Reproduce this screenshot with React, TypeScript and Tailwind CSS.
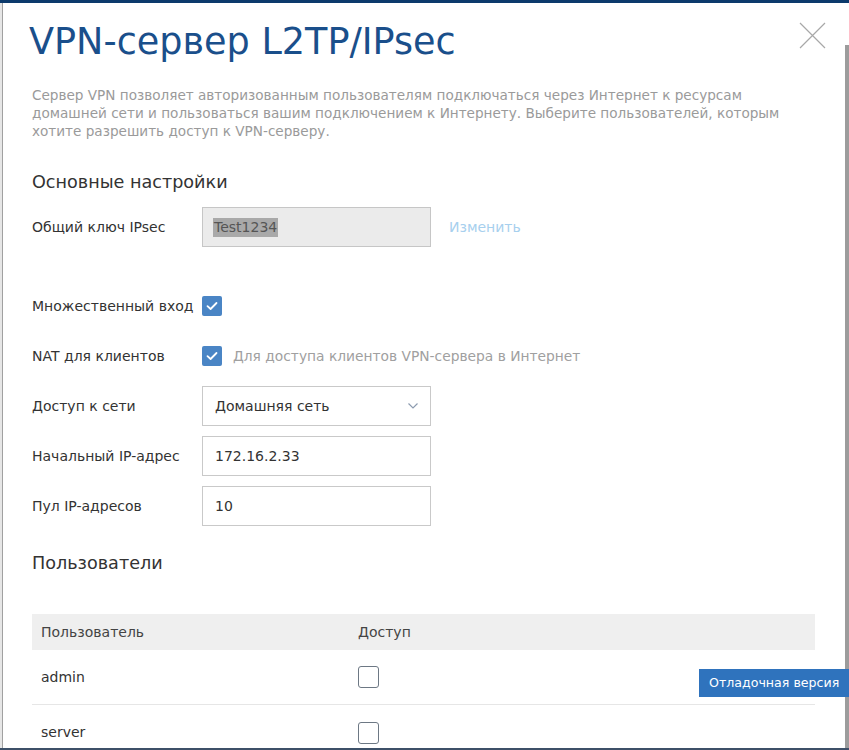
import { ReactNode } from 'react';

const font = { fontFamily: '"DejaVu Sans", Verdana, sans-serif' };

function Check({ checked }: { checked: boolean }) {
  if (checked)
    return (
      <span className="flex h-[20px] w-[20px] items-center justify-center rounded-[2px] bg-[#4a85c5]">
        <svg width="12" height="10" viewBox="0 0 12 10" fill="none">
          <path d="M1.5 5.2 L4.6 8 L10.5 2" stroke="white" strokeWidth="1.8" strokeLinecap="round" strokeLinejoin="round" />
        </svg>
      </span>
    );
  return <span className="block h-[22px] w-[21px] rounded-[3px] border border-[#6d7884] bg-white" />;
}

function Row({ label, children }: { label: string; children: ReactNode }) {
  return (
    <div className="flex h-[40px] items-center">
      <div className="w-[170px] text-[14px] text-[#333]">{label}</div>
      <div className="flex items-center">{children}</div>
    </div>
  );
}

function TextBox({ value }: { value: string }) {
  return (
    <div className="flex h-[40px] w-[229px] items-center border border-[#c9c9c9] bg-white px-[12px] text-[14px] text-[#333]">
      {value}
    </div>
  );
}

const users = ['admin', 'server'];

export default function App() {
  return (
    <div className="relative flex h-[750px] w-[849px] flex-col overflow-hidden bg-white" style={font}>
      <div className="h-[3px] bg-[#0c3a6c]" />
      <div className="flex min-h-0 flex-1">
        <div className="w-[3px] border-r border-[#a0a0a0] bg-[#e6e6e6]" />
        <div className="min-w-0 flex-1 overflow-hidden pl-[29px] pr-[30px]">
          <div className="mt-[19px] flex items-start justify-between">
            <h1 className="ml-[-3px] text-[36.6px] leading-[40px] text-[#1a4f8b]">VPN-сервер L2TP/IPsec</h1>
            <button className="mr-[-11px] mt-[0px]">
              <svg width="27" height="27" viewBox="0 0 27 27">
                <path d="M1 1 L26 26 M26 1 L1 26" stroke="#a8a8a8" strokeWidth="1.2" />
              </svg>
            </button>
          </div>

          <p className="mt-[24px] text-[13.6px] leading-[18px] text-[#9a9a9a]">
            Сервер VPN позволяет авторизованным пользователям подключаться через Интернет к ресурсам
            <br />
            домашней сети и пользоваться вашим подключением к Интернету. Выберите пользователей, которым
            <br />
            хотите разрешить доступ к VPN-серверу.
          </p>

          <h2 className="mt-[30px] text-[17.6px] leading-[24px] text-[#333]">Основные настройки</h2>

          <div className="mt-[13px]">
            <Row label="Общий ключ IPsec">
              <div className="flex h-[40px] w-[229px] items-center border border-[#c6c6c6] bg-[#ebebeb] px-[10px] text-[14px] text-[#555]">
                <span className="bg-[#a9a9a9] px-[1px] leading-[19px]">Test1234</span>
              </div>
              <span className="ml-[18px] text-[14px] text-[#a7d0ee]">Изменить</span>
            </Row>
          </div>

          <div className="mt-[39px] flex flex-col gap-[10px]">
            <Row label="Множественный вход">
              <Check checked />
            </Row>
            <Row label="NAT для клиентов">
              <Check checked />
              <span className="ml-[11px] text-[13.8px] text-[#a0a0a0]">Для доступа клиентов VPN-сервера в Интернет</span>
            </Row>
            <Row label="Доступ к сети">
              <div className="flex h-[40px] w-[229px] items-center justify-between border border-[#c9c9c9] bg-white pl-[12px] pr-[12px] text-[14px] text-[#333]">
                Домашняя сеть
                <svg width="10" height="6" viewBox="0 0 10 6" fill="none">
                  <path d="M0.5 0.5 L5 5 L9.5 0.5" stroke="#8d9cb0" strokeWidth="1.2" />
                </svg>
              </div>
            </Row>
            <Row label="Начальный IP-адрес">
              <TextBox value="172.16.2.33" />
            </Row>
            <Row label="Пул IP-адресов">
              <TextBox value="10" />
            </Row>
          </div>

          <h2 className="mt-[25px] text-[17.6px] leading-[24px] text-[#333]">Пользователи</h2>

          <div className="mt-[39px]">
            <div className="flex h-[36px] items-center bg-[#efefef] text-[14px] text-[#444]">
              <div className="w-[326px] pl-[9px]">Пользователь</div>
              <div>Доступ</div>
            </div>
            {users.map((user, index) => (
              <div
                key={user}
                className={
                  index < users.length - 1
                    ? 'flex h-[55px] items-center border-b border-[#e6e6e6] text-[14px] text-[#333]'
                    : 'flex h-[55px] items-center text-[14px] text-[#333]'
                }
              >
                <div className="w-[326px] pl-[9px]">{user}</div>
                <Check checked={false} />
              </div>
            ))}
          </div>
        </div>
        <div className="flex w-[4px] flex-col">
          <div className="h-[42px] bg-white" />
          <div className="flex-1 bg-[#9c9c9c]" />
        </div>
      </div>
      <div className="h-[2px] bg-[#3d5068]" />

      <div className="absolute left-[699px] top-[669px] flex h-[28px] w-[150px] items-center whitespace-nowrap bg-[#2f73bd] pl-[10px] text-[12.6px] text-white">
        Отладочная версия
      </div>
    </div>
  );
}
